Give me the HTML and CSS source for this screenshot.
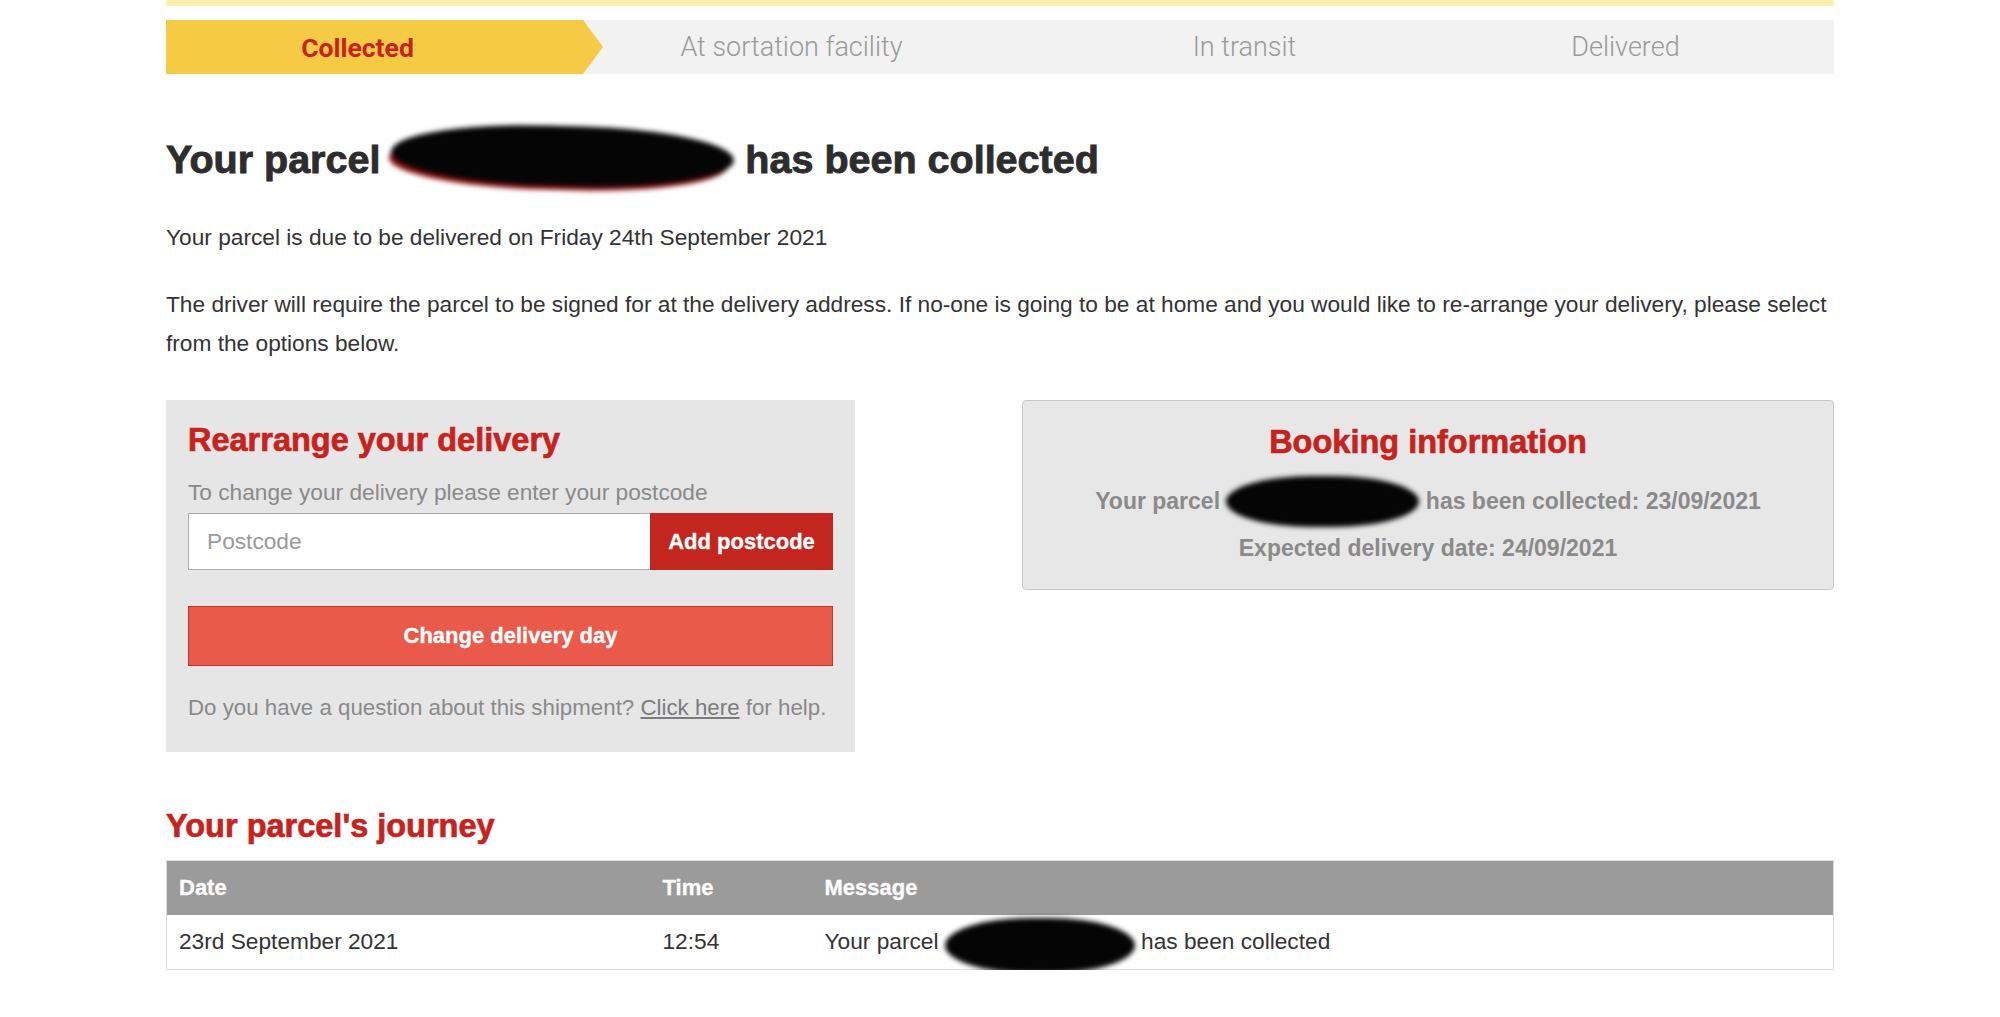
FILE: index.html
```html
<!DOCTYPE html>
<html lang="en">
<head>
<meta charset="utf-8">
<title>Track your parcel</title>
<link rel="stylesheet" href="styles.css">
</head>
<body>
<div class="page">
  <div class="topstrip"></div>
  <ol class="steps">
    <li class="step active">Collected</li>
    <li class="step">At sortation facility</li>
    <li class="step transit">In transit</li>
    <li class="step">Delivered</li>
  </ol>

  <h1 class="headline">Your parcel <span class="redact redact-h1"></span> has been collected</h1>
  <p class="due">Your parcel is due to be delivered on Friday 24th September 2021</p>
  <p class="driver">The driver will require the parcel to be signed for at the delivery address. If no-one is going to be at home and you would like to re-arrange your delivery, please select from the options below.</p>

  <div class="panels">
    <section class="rearrange">
      <h2 class="title">Rearrange your delivery</h2>
      <p class="hint">To change your delivery please enter your postcode</p>
      <div class="postcode-row">
        <input class="postcode-input" type="text" placeholder="Postcode">
        <button class="add-btn" type="button">Add postcode</button>
      </div>
      <button class="change-btn" type="button">Change delivery day</button>
      <p class="help">Do you have a question about this shipment? <a href="#">Click here</a> for help.</p>
    </section>

    <section class="booking">
      <h2 class="title">Booking information</h2>
      <p class="info first">Your parcel <span class="redact redact-info"></span> has been collected: 23/09/2021</p>
      <p class="info">Expected delivery date: 24/09/2021</p>
    </section>
  </div>

  <h2 class="title journey-title">Your parcel's journey</h2>
  <table class="journey">
    <thead>
      <tr><th class="c-date">Date</th><th class="c-time">Time</th><th>Message</th></tr>
    </thead>
    <tbody>
      <tr><td>23rd September 2021</td><td>12:54</td><td>Your parcel <span class="redact redact-row"></span> has been collected</td></tr>
    </tbody>
  </table>
</div>
</body>
</html>
```

FILE: styles.css
```css
* { box-sizing: border-box; }

body {
  margin: 0;
  background: #ffffff;
  font-family: "Liberation Sans", Arial, sans-serif;
  font-size: 22.7px;
  color: #333333;
}

.page {
  width: 1668px;
  margin: 0 auto;
}

.topstrip {
  height: 6px;
  background: #fcefb2;
}

.steps {
  display: grid;
  grid-template-columns: repeat(4, 1fr);
  height: 54px;
  margin: 14px 0 0;
  padding: 0;
  list-style: none;
  background: #f2f2f2;
}

.step {
  display: flex;
  align-items: center;
  justify-content: center;
  font-family: Roboto, "Liberation Sans", sans-serif;
  font-weight: 300;
  font-size: 27px;
  color: #9a9a9a;
}

.step.active {
  position: relative;
  background: #f5cb45;
  color: #c8221c;
  font-weight: 700;
  font-size: 26.5px;
  padding-right: 34px;
}

.step.active::after {
  content: "";
  position: absolute;
  top: 0;
  right: -20px;
  border-left: 20px solid #f5cb45;
  border-top: 27px solid transparent;
  border-bottom: 27px solid transparent;
}

.step.transit { padding-left: 72px; }

.headline {
  margin: 61px 0 0;
  font-size: 39.5px;
  line-height: 48px;
  font-weight: 700;
  color: #2d2d2d;
  -webkit-text-stroke: 0.9px #2d2d2d;
}

.redact {
  display: inline-block;
  background: #050505;
  border-radius: 45% / 50%;
  filter: blur(2.5px);
}

.redact-h1 {
  width: 343px;
  height: 60px;
  margin: -20px 0;
  vertical-align: 7px;
  transform: rotate(1.5deg);
  box-shadow: -4px 6px 0 -2px #8c1010;
}

.redact-info {
  width: 193px;
  height: 51px;
  margin: -15px 0;
  vertical-align: -3px;
}

.redact-row {
  width: 190px;
  height: 55px;
  margin: -18px 0;
  vertical-align: -6px;
}

.due {
  margin: 34px 0 0;
  line-height: 40px;
}

.driver {
  margin: 28px 0 0;
  line-height: 39px;
}

.panels {
  display: flex;
  justify-content: space-between;
  align-items: flex-start;
  margin-top: 37px;
}

.title {
  margin: 0;
  font-size: 32.5px;
  line-height: 40px;
  font-weight: 700;
  color: #c8221c;
  -webkit-text-stroke: 0.7px #c8221c;
}

.rearrange {
  width: 689px;
  background: #e6e6e6;
  padding: 20px 22px 29px;
}

.hint {
  margin: 17px 0 0;
  line-height: 30px;
  color: #8a8a8a;
  white-space: nowrap;
}

.postcode-row {
  display: flex;
  height: 57px;
  margin-top: 6px;
}

.postcode-input {
  flex: 1;
  min-width: 0;
  border: 1px solid #adadad;
  border-right: 0;
  background: #ffffff;
  padding: 0 18px;
  font-family: inherit;
  font-size: 22.7px;
  color: #333333;
}

.postcode-input::placeholder { color: #9a9a9a; }

.add-btn {
  width: 183px;
  border: 0;
  background: #c3261e;
  color: #ffffff;
  font-family: inherit;
  font-size: 22px;
  font-weight: 700;
  -webkit-text-stroke: 0.3px #ffffff;
}

.change-btn {
  display: block;
  width: 100%;
  height: 60px;
  margin-top: 36px;
  background: #ea5a4b;
  border: 1px solid #cf3125;
  color: #ffffff;
  font-family: inherit;
  font-size: 22px;
  font-weight: 700;
  -webkit-text-stroke: 0.3px #ffffff;
}

.help {
  margin: 27px 0 0;
  font-size: 22.3px;
  line-height: 30px;
  color: #8a8a8a;
  white-space: nowrap;
}

.help a { color: #7c7c7c; }

.booking {
  width: 812px;
  background: #e7e7e7;
  border: 1px solid #c9c9c9;
  border-radius: 4px;
  padding: 21px 20px 17px;
  text-align: center;
}

.info {
  margin: 0;
  font-size: 23px;
  line-height: 47px;
  font-weight: 700;
  color: #8a8a8a;
}

.info.first { margin-top: 16px; }

.journey-title { margin-top: 54px; }

.journey {
  width: 100%;
  margin-top: 14px;
  border-collapse: collapse;
  border: 1px solid #dddddd;
}

.journey th {
  height: 54px;
  padding: 0 12px;
  background: #9b9b9b;
  color: #ffffff;
  font-size: 22px;
  font-weight: 700;
  text-align: left;
  -webkit-text-stroke: 0.3px #ffffff;
}

.journey .c-date { width: 484px; }
.journey .c-time { width: 162px; }

.journey td {
  height: 55px;
  padding: 0 12px;
  background: #ffffff;
}
```
